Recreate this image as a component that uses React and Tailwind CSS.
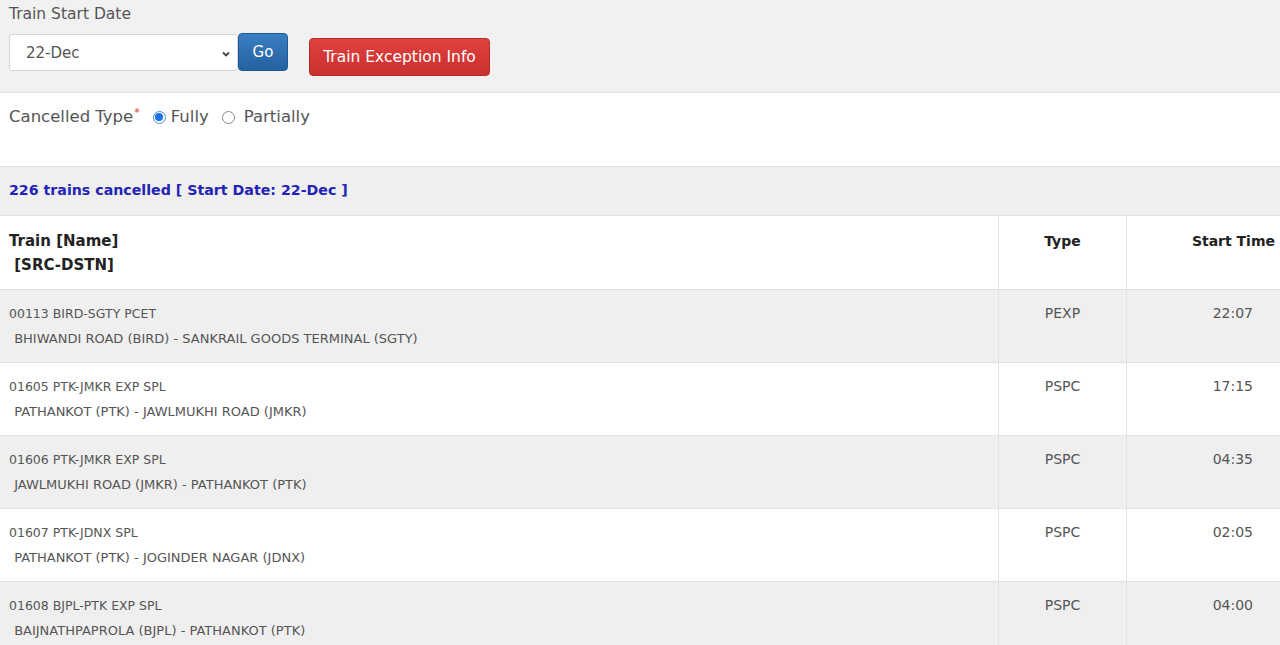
import React from 'react';

const rows = [
  { no: '00113 BIRD-SGTY PCET', route: 'BHIWANDI ROAD (BIRD) - SANKRAIL GOODS TERMINAL (SGTY)', type: 'PEXP', time: '22:07' },
  { no: '01605 PTK-JMKR EXP SPL', route: 'PATHANKOT (PTK) - JAWLMUKHI ROAD (JMKR)', type: 'PSPC', time: '17:15' },
  { no: '01606 PTK-JMKR EXP SPL', route: 'JAWLMUKHI ROAD (JMKR) - PATHANKOT (PTK)', type: 'PSPC', time: '04:35' },
  { no: '01607 PTK-JDNX SPL', route: 'PATHANKOT (PTK) - JOGINDER NAGAR (JDNX)', type: 'PSPC', time: '02:05' },
  { no: '01608 BJPL-PTK EXP SPL', route: 'BAIJNATHPAPROLA (BJPL) - PATHANKOT (PTK)', type: 'PSPC', time: '04:00' },
];

export default function App() {
  return (
    <div className="w-[1280px] h-[645px] overflow-hidden bg-white text-[#444] font-['DejaVu_Sans',sans-serif]">
      {/* date filter */}
      <div className="h-[93px] bg-[#f1f1f1] border-b border-[#e2e2e2] px-[9px] pt-[5px]">
        <div className="text-[15.5px] leading-[18px] text-[#555]">Train Start Date</div>
        <div className="flex items-start mt-[11px]">
          <div className="w-[229px] h-[37px] bg-white border border-[#d6d6d6] rounded-[3px] flex items-center justify-between pl-[16px] pr-[6px] pt-[2px] text-[15px] text-[#555]">
            <span>22-Dec</span>
            <svg width="10" height="10" viewBox="0 0 10 10" className="text-[#444]">
              <path d="M2 3.5 L5 6.5 L8 3.5" fill="none" stroke="currentColor" strokeWidth="1.8" />
            </svg>
          </div>
          <button className="-mt-[1px] w-[50px] h-[38px] rounded-[4px] bg-gradient-to-b from-[#3a7fc2] to-[#2461a0] border border-[#1f5a94] text-white text-[15px]">
            Go
          </button>
          <button className="ml-[21px] mt-[4px] w-[181px] h-[38px] pt-[2px] rounded-[4px] bg-gradient-to-b from-[#e0413f] to-[#c9302e] border border-[#b52b29] text-white text-[15.5px]">
            Train Exception Info
          </button>
        </div>
      </div>

      {/* cancelled type */}
      <div className="h-[74px] px-[9px] pt-[14px] flex items-start text-[16.5px] text-[#555] border-b border-[#e2e2e2]">
        <span className="flex items-center h-[20px]">
          Cancelled Type<span className="text-[#d33] text-[11px] -mt-[8px] ml-[1px]">*</span>
        </span>
        <label className="flex items-center h-[20px] ml-[13px]">
          <span className="w-[13px] h-[13px] rounded-full border border-[#4a8fe0] flex items-center justify-center bg-white">
            <span className="w-[8px] h-[8px] rounded-full bg-[#1a73e8]" />
          </span>
          <span className="ml-[5px]">Fully</span>
        </label>
        <label className="flex items-center h-[20px] ml-[13px]">
          <span className="w-[13px] h-[13px] rounded-full border border-[#888] bg-white" />
          <span className="ml-[9px]">Partially</span>
        </label>
      </div>

      {/* count bar */}
      <div className="h-[49px] bg-[#efefef] border-b border-[#e2e2e2] px-[9px] flex items-center">
        <span className="text-[14.2px] font-bold text-[#2324b5]">226 trains cancelled [ Start Date: 22-Dec ]</span>
      </div>

      {/* table */}
      <div className="grid grid-cols-[999px_128px_1fr]">
        <div className="h-[74px] px-[9px] pt-[13px] text-[15px] leading-[24px] font-bold text-[#222] border-b border-[#e0e0e0] border-r">
          <div>Train [Name]</div>
          <div>&nbsp;[SRC-DSTN]</div>
        </div>
        <div className="h-[74px] pt-[13px] text-[14px] leading-[24px] font-bold text-[#222] text-center border-b border-r border-[#e0e0e0]">
          Type
        </div>
        <div className="h-[74px] pt-[13px] pr-[5px] text-[14px] leading-[24px] font-bold text-[#222] text-right border-b border-[#e0e0e0]">
          Start Time
        </div>

        {rows.map((r, i) => {
          const bg = i % 2 === 0 ? 'bg-[#efefef]' : 'bg-white';
          return (
            <React.Fragment key={r.no}>
              <div className={`${bg} h-[73px] px-[9px] pt-[11px] leading-[25px] text-[#555] border-r border-b border-[#e3e3e3]`}>
                <div className="text-[12.5px]">{r.no}</div>
                <div className="text-[13px] pl-[1px]">&nbsp;{r.route}</div>
              </div>
              <div className={`${bg} h-[73px] pt-[11px] text-[14px] leading-[25px] text-[#555] text-center border-r border-b border-[#e3e3e3]`}>
                {r.type}
              </div>
              <div className={`${bg} h-[73px] pt-[11px] pr-[27px] text-[14px] leading-[25px] text-[#555] text-right border-b border-[#e3e3e3]`}>
                {r.time}
              </div>
            </React.Fragment>
          );
        })}
      </div>
    </div>
  );
}
